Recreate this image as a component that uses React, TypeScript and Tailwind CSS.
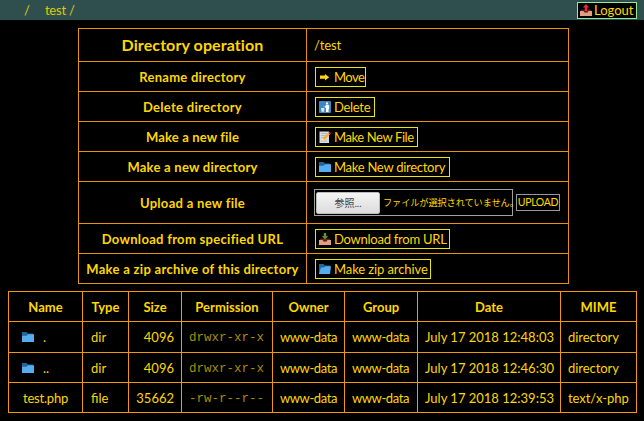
import React from "react";

const Folder = ({ open = false }: { open?: boolean }) => (
  <svg viewBox="0 0 12 12" className="h-3 w-3 shrink-0">
    <path d="M0 1h4.5L6 2.6h5V11H0z" fill="#226699" />
    <path d={open ? "M2 4.6h3l1.5-1.4H12L11 11H0z" : "M0 4.8h4.5L6 3.2h6V11H0z"} fill="#55acee" />
  </svg>
);

const Tray = ({ up = false }: { up?: boolean }) => (
  <svg viewBox="0 0 12 12" className="h-3 w-3 shrink-0">
    <path d="M1.5 5.5h9L12 8.5H0z" fill="#662113" />
    <path d="M0 7h3.5l1 1.6h3l1-1.6H12v5H0z" fill="#e39f86" />
    <path
      d={up ? "M6 0l3.2 3.6H7.2V7H4.8V3.6H2.8z" : "M4.8 0h2.4v3h2L6 6.6 2.8 3h2z"}
      fill={up ? "#dd2e44" : "#5c913b"}
    />
  </svg>
);

const Arrow = () => (
  <svg viewBox="0 0 12 12" className="h-3 w-3 shrink-0">
    <path d="M1 4.6h5V2.9L10.2 6.2 6 9.5V7.8H1z" fill="#ffd700" />
  </svg>
);

const Litter = () => (
  <svg viewBox="0 0 12 12" className="h-3 w-3 shrink-0">
    <rect width="12" height="12" rx="1" fill="#3b88c3" />
    <circle cx="8" cy="2.4" r="1.1" fill="#fff" />
    <path d="M7 3.8h2.4l.8 1v3l-.6.4V11H7V7L5.8 6.2z" fill="#fff" />
    <path d="M2 7h3.5L5 10.8H2.6zM4.5 4.8l1.2.6-.7.9z" fill="#d5e8f5" />
  </svg>
);

const Memo = () => (
  <svg viewBox="0 0 12 12" className="h-3 w-3 shrink-0">
    <path d="M.5.5h9.5V12H.5z" fill="#d5dce2" />
    <path d="M2 2.5h6M2 4.5h5M2 6.5h3M2 10h6" stroke="#99aab5" strokeWidth=".6" />
    <path d="M9.3 1.5l1.8 1.8-5.6 5.8-2.7 1 .9-2.8z" fill="#ffac33" />
    <path d="M9.3 1.5l1-1 1.7 1.8-.9 1z" fill="#dd2e44" />
    <path d="M3.7 7.3l1.8 1.8-2.7 1z" fill="#ffe8b6" />
  </svg>
);

type OpProps = { label: string; labelClass: string; children: React.ReactNode };

const Op = ({ label, labelClass, children }: OpProps) => (
  <>
    <div className="flex items-center justify-center bg-black font-bold whitespace-nowrap">
      <span className={labelClass}>{label}</span>
    </div>
    <div className="flex items-center bg-black pl-[7px]">{children}</div>
  </>
);

type BtnProps = { icon: React.ReactNode; text: string; box: string; textClass: string };

const Btn = ({ icon, text, box, textClass }: BtnProps) => (
  <button className={`ml-px flex h-5 items-center gap-[3px] border border-[#e8e800] pl-[3px] whitespace-nowrap ${box}`}>
    {icon}
    <span className={textClass}>{text}</span>
  </button>
);

const rows = [
  { name: ".", folder: true, type: "dir", size: "4096", perm: "drwxr-xr-x", date: "July 17 2018 12:48:03", mime: "directory" },
  { name: "..", folder: true, type: "dir", size: "4096", perm: "drwxr-xr-x", date: "July 17 2018 12:46:30", mime: "directory" },
  { name: "test.php", folder: false, type: "file", size: "35662", perm: "-rw-r--r--", date: "July 17 2018 12:39:53", mime: "text/x-php" },
];

const heads = ["Name", "Type", "Size", "Permission", "Owner", "Group", "Date", "MIME"];
const cell = "flex items-center bg-black";

export default function App() {
  return (
    <div className="h-[421px] w-[644px] overflow-hidden bg-black font-[Lato,'Noto_Sans_CJK_JP',sans-serif] text-[13px] leading-4 text-[#ffd700]">
      <header className="flex h-5 items-center justify-between bg-[#2f4f4f] pr-[7px] pl-6">
        <nav className="flex gap-[15px] text-[#e0c80a]">
          <span>/</span>
          <span className="tracking-[-0.2px]">test /</span>
        </nav>
        <button className="flex h-[17px] w-[60px] items-center gap-[2px] border border-[#90ee90] bg-black pl-0.5">
          <Tray up />
          <span>Logout</span>
        </button>
      </header>

      <section className="mt-2 ml-[78px] grid w-[491px] grid-cols-[227px_261px] grid-rows-[32px_29px_29px_29px_29px_41px_29px_29px] gap-px bg-[#e89600] p-px">
        <Op label="Directory operation" labelClass="text-[16px] tracking-[0.1px]">
          <span className="tracking-[-0.1px]">/test</span>
        </Op>
        <Op label="Rename directory" labelClass="tracking-[0.25px]">
          <Btn icon={<Arrow />} text="Move" box="w-[51px]" textClass="tracking-[-0.5px]" />
        </Op>
        <Op label="Delete directory" labelClass="tracking-[0.3px]">
          <Btn icon={<Litter />} text="Delete" box="w-[60px]" textClass="tracking-[-0.3px]" />
        </Op>
        <Op label="Make a new file" labelClass="tracking-[0.15px]">
          <Btn icon={<Memo />} text="Make New File" box="w-[103px]" textClass="tracking-[-0.4px]" />
        </Op>
        <Op label="Make a new directory" labelClass="tracking-[0.25px]">
          <Btn icon={<Folder />} text="Make New directory" box="w-[135px]" textClass="tracking-[-0.27px]" />
        </Op>
        <Op label="Upload a new file" labelClass="tracking-[0.3px]">
          <div className="flex h-[27px] w-[199px] shrink-0 items-center border border-[#a0a0a0] pl-px">
            <span className="flex h-[22px] w-16 shrink-0 items-center justify-center rounded-[2px] border border-[#bbb] bg-linear-to-b from-[#f4f4f4] to-[#dcdcdc] text-[10px] text-[#404040]">参照...</span>
            <span className="ml-[3px] text-[9.2px] tracking-[-0.1px] whitespace-nowrap">ファイルが選択されていません。</span>
          </div>
          <button className="ml-[3px] h-[17px] w-11 border border-[#999] text-[10.5px] leading-[15px] tracking-[-0.3px]">UPLOAD</button>
        </Op>
        <Op label="Download from specified URL" labelClass="tracking-[0.3px]">
          <Btn icon={<Tray />} text="Download from URL" box="w-[135px]" textClass="tracking-[-0.25px]" />
        </Op>
        <Op label="Make a zip archive of this directory" labelClass="tracking-[0.3px]">
          <Btn icon={<Folder open />} text="Make zip archive" box="w-[116px]" textClass="tracking-[-0.1px]" />
        </Op>
      </section>

      <section className="mt-[7px] ml-2 grid w-[629px] grid-cols-[73px_45px_52px_90px_71px_72px_142px_75px] grid-rows-[29px_30px_29px_29px] gap-px bg-[#ee9a00] p-px whitespace-nowrap">
        {heads.map((h) => (
          <div key={h} className={`${cell} justify-center font-bold`}>
            <span>{h}</span>
          </div>
        ))}
        {rows.map((r) => (
          <React.Fragment key={r.name}>
            <div className={`${cell} pl-[13px]`}>
              {r.folder && <Folder />}
              <span className={r.folder ? "ml-[9px]" : "ml-px tracking-[-0.2px]"}>{r.name}</span>
            </div>
            <div className={`${cell} pl-2`}>{r.type}</div>
            <div className={`${cell} justify-end pr-[7px]`}>{r.size}</div>
            <div className={`${cell} pt-0.5 pl-[7px] font-['Liberation_Mono',monospace] text-[12.5px] text-[#a88e00]`}>{r.perm}</div>
            <div className={`${cell} pl-[7px] tracking-[-0.4px]`}>www-data</div>
            <div className={`${cell} pl-[7px] tracking-[-0.4px]`}>www-data</div>
            <div className={`${cell} pl-[7px]`}>{r.date}</div>
            <div className={`${cell} pl-[7px] tracking-[-0.05px]`}>{r.mime}</div>
          </React.Fragment>
        ))}
      </section>
    </div>
  );
}
